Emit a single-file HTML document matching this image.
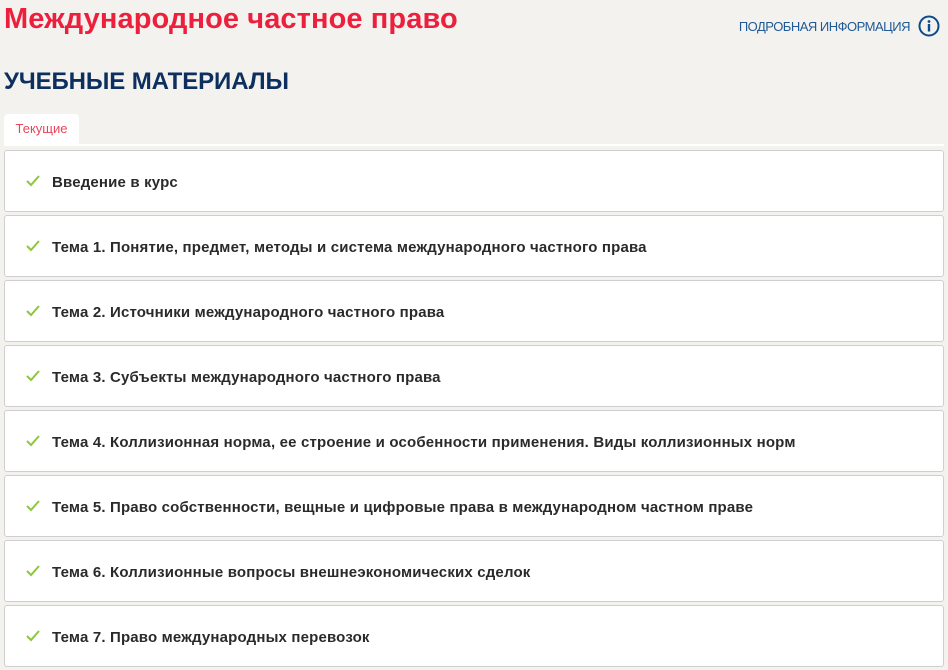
<!DOCTYPE html>
<html><head><meta charset="utf-8"><style>
body{margin:0;background:#f3f2ef;font-family:"Liberation Sans","DejaVu Sans",sans-serif;width:948px;height:670px;overflow:hidden;position:relative}
.t{position:absolute;left:4px;top:3px;font-size:29px;font-weight:bold;color:#ec1f3d;letter-spacing:0.1px}
.info{position:absolute;right:8px;top:15px;font-size:13px;color:#1f5a96;display:flex;align-items:center}
.info span{margin-right:8px;letter-spacing:-0.5px}
.h{position:absolute;left:4px;top:68px;font-size:24px;font-weight:bold;color:#0d2f5e;letter-spacing:-0.1px}
.tab{position:absolute;left:4px;top:114px;width:75px;height:30px;background:#fff;border-radius:4px 4px 0 0;font-size:13px;color:#e8455a;text-align:center;line-height:30px}
.line{position:absolute;left:4px;right:4px;top:144px;height:2px;background:#fff}
.c{position:absolute;left:4px;width:938px;height:60px;background:#fff;border:1px solid #cfcfcf;border-radius:3px;font-size:15px;font-weight:bold;color:#2a2a2a;line-height:64px;letter-spacing:0.17px}
.c svg{position:absolute;left:21px;top:24px}
.c span{position:absolute;left:47px}
</style></head><body>
<div class="t">Международное частное право</div>
<div class="info"><span>ПОДРОБНАЯ ИНФОРМАЦИЯ</span><svg width="22" height="22" viewBox="0 0 22 22"><circle cx="11" cy="11" r="9.5" fill="none" stroke="#0d4a8a" stroke-width="2"/><circle cx="11" cy="6.5" r="1.4" fill="#0d4a8a"/><rect x="9.8" y="9" width="2.4" height="7.5" fill="#0d4a8a"/></svg></div>
<div class="h">УЧЕБНЫЕ МАТЕРИАЛЫ</div>
<div class="tab">Текущие</div>
<div class="line"></div>
<div class="c" style="top:150px"><svg width="14" height="12"><path d="M1 6l4 4 8-9" fill="none" stroke="#8dc63f" stroke-width="2"/></svg><span>Введение в курс</span></div>
<div class="c" style="top:215px"><svg width="14" height="12"><path d="M1 6l4 4 8-9" fill="none" stroke="#8dc63f" stroke-width="2"/></svg><span>Тема 1. Понятие, предмет, методы и система международного частного права</span></div>
<div class="c" style="top:280px"><svg width="14" height="12"><path d="M1 6l4 4 8-9" fill="none" stroke="#8dc63f" stroke-width="2"/></svg><span>Тема 2. Источники международного частного права</span></div>
<div class="c" style="top:345px"><svg width="14" height="12"><path d="M1 6l4 4 8-9" fill="none" stroke="#8dc63f" stroke-width="2"/></svg><span>Тема 3. Субъекты международного частного права</span></div>
<div class="c" style="top:410px"><svg width="14" height="12"><path d="M1 6l4 4 8-9" fill="none" stroke="#8dc63f" stroke-width="2"/></svg><span>Тема 4. Коллизионная норма, ее строение и особенности применения. Виды коллизионных норм</span></div>
<div class="c" style="top:475px"><svg width="14" height="12"><path d="M1 6l4 4 8-9" fill="none" stroke="#8dc63f" stroke-width="2"/></svg><span>Тема 5. Право собственности, вещные и цифровые права в международном частном праве</span></div>
<div class="c" style="top:540px"><svg width="14" height="12"><path d="M1 6l4 4 8-9" fill="none" stroke="#8dc63f" stroke-width="2"/></svg><span>Тема 6. Коллизионные вопросы внешнеэкономических сделок</span></div>
<div class="c" style="top:605px"><svg width="14" height="12"><path d="M1 6l4 4 8-9" fill="none" stroke="#8dc63f" stroke-width="2"/></svg><span>Тема 7. Право международных перевозок</span></div>
</body></html>
